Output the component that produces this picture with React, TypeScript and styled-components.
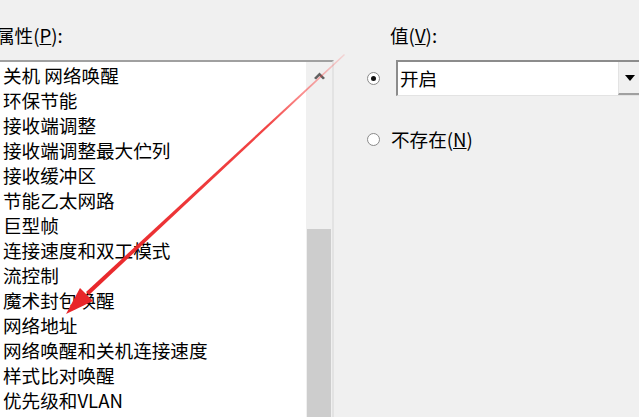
import { createGlobalStyle, styled } from "styled-components";

const GlobalStyle = createGlobalStyle`
  html, body {
    margin: 0;
    padding: 0;
    background: #f0f0f0;
  }
  body {
    font-family: "Noto Sans CJK SC", "Noto Sans", sans-serif;
    color: #000;
  }
`;

const properties = [
  "关机 网络唤醒",
  "环保节能",
  "接收端调整",
  "接收端调整最大伫列",
  "接收缓冲区",
  "节能乙太网路",
  "巨型帧",
  "连接速度和双工模式",
  "流控制",
  "魔术封包唤醒",
  "网络地址",
  "网络唤醒和关机连接速度",
  "样式比对唤醒",
  "优先级和VLAN",
  "中断调节",
];

export default function App() {
  return (
    <Frame>
      <GlobalStyle />
      <LeftPane>
        <Label $indent={-4}>
          属性(<u>P</u>):
        </Label>
        <ListBox>
          <Items>
            {properties.map((p) => (
              <Item key={p}>{p}</Item>
            ))}
          </Items>
          <ScrollBar>
            <ArrowButton>
              <svg width="11" height="8" viewBox="0 0 11 8">
                <path d="M0 6 L5.5 0.5 L11 6 L9 7.5 L5.5 4 L2 7.5 Z" fill="#606060" />
              </svg>
            </ArrowButton>
            <Track />
            <Thumb />
          </ScrollBar>
        </ListBox>
      </LeftPane>
      <RightPane>
        <Label $indent={23}>
          值(<u>V</u>):
        </Label>
        <OptionRow>
          <Radio $checked />
          <Combo>
            <ComboText>开启</ComboText>
            <DropButton>
              <svg width="10" height="6" viewBox="0 0 10 6">
                <path d="M0 0 H10 L5 6 Z" fill="#000" />
              </svg>
            </DropButton>
          </Combo>
        </OptionRow>
        <OptionRow $top={30}>
          <Radio />
          <OptionText>
            不存在(<u>N</u>)
          </OptionText>
        </OptionRow>
      </RightPane>
      <Annotation width="639" height="417" viewBox="0 0 639 417">
        <defs>
          <linearGradient id="fade" x1="344" y1="54" x2="90" y2="292" gradientUnits="userSpaceOnUse">
            <stop offset="0" stopColor="#ff3b3b" stopOpacity="0.15" />
            <stop offset="0.3" stopColor="#f03030" stopOpacity="0.9" />
            <stop offset="1" stopColor="#e8262a" />
          </linearGradient>
        </defs>
        <path d="M344 54 L345 55 L89 295 L86 292 Z" fill="url(#fade)" />
        <path d="M66 314 L80 288 L93 301 Z" fill="#e8262a" />
      </Annotation>
    </Frame>
  );
}

const Frame = styled.div`
  position: relative;
  width: 639px;
  height: 417px;
  overflow: hidden;
  display: flex;
  background: #f0f0f0;
`;

const LeftPane = styled.div`
  flex: none;
  width: 334px;
  display: flex;
  flex-direction: column;
  padding-top: 22px;
  box-sizing: border-box;
`;

const RightPane = styled.div`
  flex: none;
  width: 340px;
  display: flex;
  flex-direction: column;
  padding-top: 22px;
  padding-left: 33px;
  box-sizing: border-box;
`;

const Label = styled.div<{ $indent: number }>`
  margin-left: ${(p) => p.$indent}px;
  font-size: 18.6px;
  line-height: 26px;
  height: 38px;
  white-space: nowrap;
`;

const ListBox = styled.div`
  flex: 1;
  display: flex;
  background: #fff;
  border-top: 2px solid #a0a0a0;
  border-right: 2px solid #e3e3e3;
  min-height: 0;
`;

const Items = styled.div`
  flex: 1;
  overflow: hidden;
  padding-left: 3px;
`;

const Item = styled.div`
  font-size: 18.6px;
  height: 25px;
  line-height: 25px;
  white-space: nowrap;
`;

const ScrollBar = styled.div`
  width: 26px;
  display: flex;
  flex-direction: column;
  background: #f0f0f0;
`;

const ArrowButton = styled.div`
  height: 26px;
  display: flex;
  align-items: center;
  justify-content: center;
  padding-top: 2px;
  box-sizing: border-box;
`;

const Track = styled.div`
  height: 141px;
`;

const Thumb = styled.div`
  flex: 1;
  margin: 0 1px;
  background: #cdcdcd;
`;

const OptionRow = styled.div<{ $top?: number }>`
  display: flex;
  align-items: center;
  gap: 16px;
  margin-top: ${(p) => p.$top ?? 0}px;
`;

const Radio = styled.span<{ $checked?: boolean }>`
  position: relative;
  width: 13px;
  height: 13px;
  flex: none;
  border-radius: 50%;
  border: 1px solid #8a8a8a;
  background: #fff;
  box-sizing: border-box;
  &::after {
    content: "";
    display: ${(p) => (p.$checked ? "block" : "none")};
    position: absolute;
    left: 3px;
    top: 3px;
    width: 5px;
    height: 5px;
    border-radius: 50%;
    background: #111;
  }
`;

const Combo = styled.div`
  flex: none;
  width: 252px;
  height: 36px;
  display: flex;
  align-items: stretch;
  background: #fff;
  border-top: 2px solid #8c8c8c;
  border-left: 2px solid #8c8c8c;
  border-bottom: 1px solid #e3e3e3;
  box-sizing: border-box;
`;

const ComboText = styled.div`
  flex: 1;
  font-size: 18.6px;
  line-height: 32px;
  padding-left: 2px;
`;

const DropButton = styled.div`
  width: 22px;
  margin-right: 8px;
  display: flex;
  align-items: center;
  justify-content: center;
  background: #f0f0f0;
  border-left: 1px solid #e3e3e3;
  border-bottom: 2px solid #a0a0a0;
  box-sizing: border-box;
`;

const OptionText = styled.div`
  font-size: 18.6px;
  line-height: 26px;
  margin-left: -5px;
`;

const Annotation = styled.svg`
  position: absolute;
  left: 0;
  top: 0;
  pointer-events: none;
`;
